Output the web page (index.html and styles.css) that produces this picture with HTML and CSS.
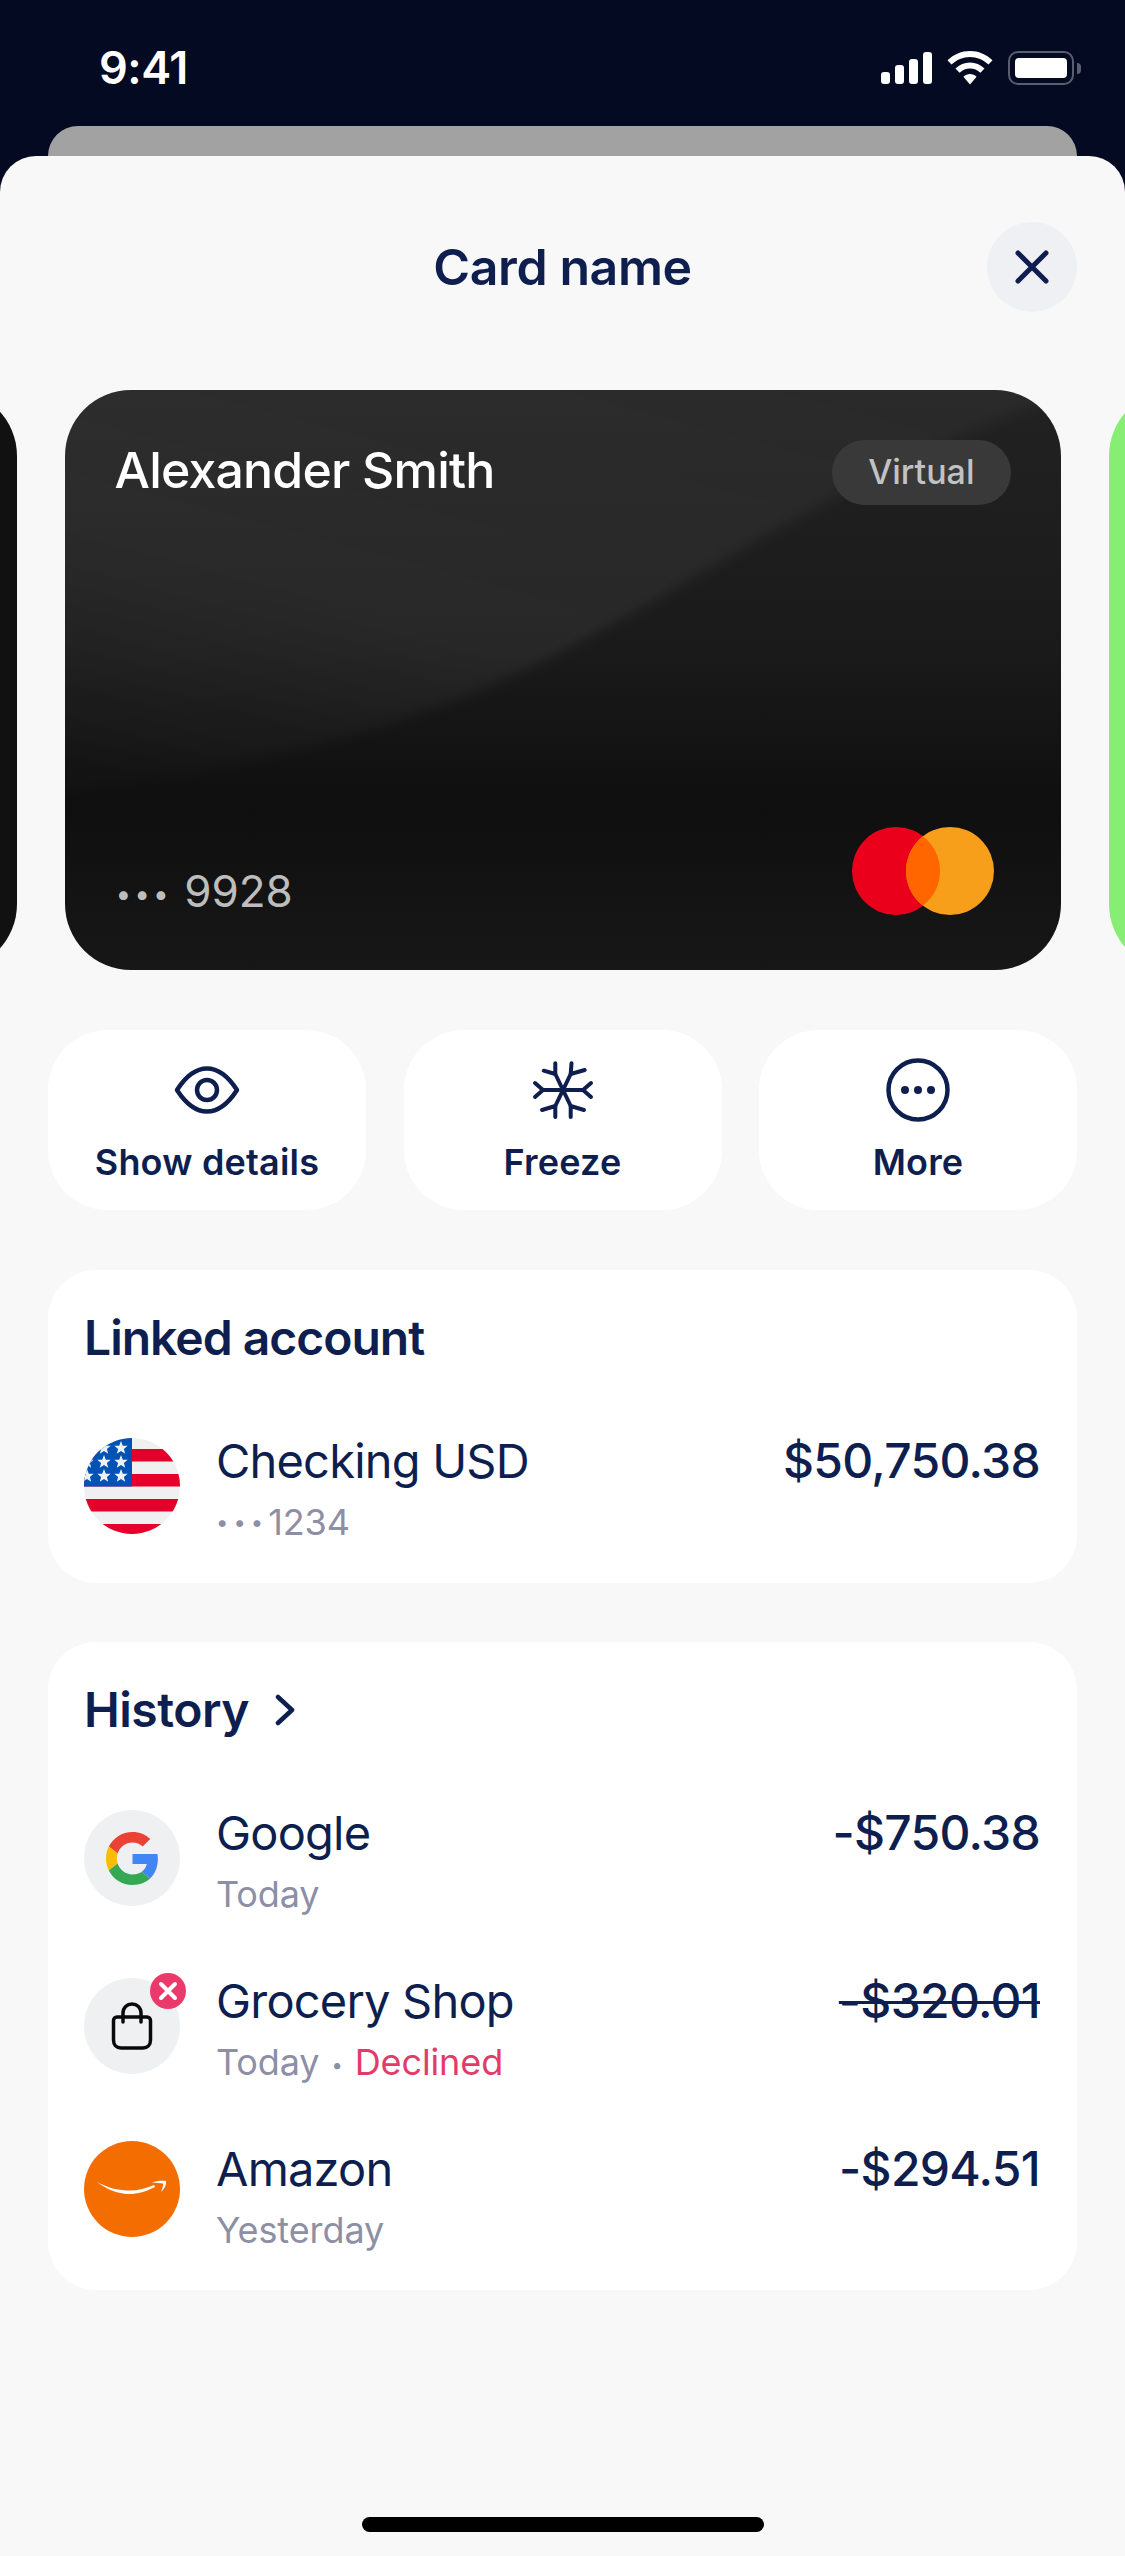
FILE: index.html
```html
<!DOCTYPE html>
<html lang="en">

<head>
  <meta charset="UTF-8">
  <meta name="viewport" content="width=device-width, initial-scale=1.0">
  <title>Card name</title>
  <link rel="stylesheet" href="styles.css">
</head>

<body>
  <div class="status-bar">
    <span class="time">9:41</span>
    <div class="status-icons">
      <svg width="51" height="32" viewBox="0 0 51 32" fill="#fff">
        <rect x="0" y="20" width="9" height="12" rx="3"/>
        <rect x="14" y="13" width="9" height="19" rx="3"/>
        <rect x="28" y="7" width="9" height="25" rx="3"/>
        <rect x="42" y="0" width="9" height="32" rx="3"/>
      </svg>
      <svg width="46" height="34" viewBox="0 0 46 34" fill="#fff">
        <path d="M23 0C14.500 0 6.800 3.300 0.500 9.300L4.500 13.600C9.500 8.800 16 6 23 6C30 6 36.500 8.800 41.500 13.600L45.500 9.300C39.200 3.300 31.500 0 23 0Z"/>
        <path d="M23 11.500C17.500 11.500 12.500 13.600 8.500 17.500L12.600 21.800C15.500 19 19 17.500 23 17.500C27 17.500 30.500 19 33.400 21.800L37.500 17.500C33.500 13.600 28.500 11.500 23 11.500Z"/>
        <path d="M23 23C20.500 23 18.300 23.900 16.400 25.700L23 33.500L29.600 25.700C27.700 23.900 25.500 23 23 23Z"/>
      </svg>
      <div class="battery">
        <div class="battery-body"><div class="battery-level"></div></div>
        <div class="battery-nub"></div>
      </div>
    </div>
  </div>

  <div class="back-sheet"></div>

  <main class="sheet">
    <header class="sheet-header">
      <h1>Card name</h1>
      <button class="close-btn" aria-label="Close">
        <svg width="36" height="36" viewBox="0 0 36 36" fill="none" stroke="#0e1f4f" stroke-width="5" stroke-linecap="round">
          <path d="M4 4L32 32M32 4L4 32"/>
        </svg>
      </button>
    </header>

    <section class="carousel">
      <div class="card card-peek"></div>
      <div class="card card-main">
        <svg class="card-sheen" viewBox="0 0 996 580" preserveAspectRatio="none">
          <defs>
            <linearGradient id="sheen" x1="0.8" y1="0" x2="0.15" y2="1">
              <stop offset="0" stop-color="#fff" stop-opacity="0.035"/>
              <stop offset="0.6" stop-color="#fff" stop-opacity="0.06"/>
              <stop offset="1" stop-color="#fff" stop-opacity="0.01"/>
            </linearGradient>
            <filter id="soft"><feGaussianBlur stdDeviation="6"/></filter>
          </defs>
          <path d="M-20 -20H1016V0C800 70 640 190 480 270C350 335 200 375 -20 404Z" fill="url(#sheen)" filter="url(#soft)"/>
        </svg>
        <div class="card-top">
          <span class="card-holder">Alexander Smith</span>
          <span class="card-tag">Virtual</span>
        </div>
        <div class="card-bottom">
          <span class="card-number"><span class="dots">•••</span> 9928</span>
          <svg class="mastercard" width="142" height="88" viewBox="0 0 142 88">
            <circle cx="44" cy="44" r="44" fill="#eb001b"/>
            <circle cx="98" cy="44" r="44" fill="#f79e1b"/>
            <path d="M71 9.500C81.700 17.500 88 30 88 44C88 58 81.700 70.500 71 78.500C60.300 70.500 54 58 54 44C54 30 60.300 17.500 71 9.500Z" fill="#ff6600"/>
          </svg>
        </div>
      </div>
      <div class="card card-peek card-green"></div>
    </section>

    <section class="actions">
      <div class="action">
        <svg width="66" height="64" viewBox="0 0 66 64" fill="none" stroke="#0e1f4f" stroke-width="4.500">
          <path d="M3 32C12 18 22 10.500 33 10.500C44 10.500 54 18 63 32C54 46 44 53.500 33 53.500C22 53.500 12 46 3 32Z" stroke-linejoin="round"/>
          <circle cx="33" cy="32" r="10"/>
        </svg>
        <span>Show details</span>
      </div>
      <div class="action">
        <svg width="64" height="64" viewBox="8 8 64 64" fill="none" stroke="#0e1f4f" stroke-width="4" stroke-linecap="round" stroke-linejoin="round">
          <path d="M20 40H60M32.300 24L47.700 56M47.700 24L32.300 56"/>
          <path d="M12 33L20 40L12 47M68 33L60 40L68 47"/>
          <path d="M32.300 13.300V24L20.700 20.700M48.500 13.300L47.700 24L61.700 20M32.300 67V56L19 60M47.700 67V56L61 60"/>
        </svg>
        <span>Freeze</span>
      </div>
      <div class="action">
        <svg width="64" height="64" viewBox="0 0 64 64" fill="none" stroke="#0e1f4f" stroke-width="4.500">
          <circle cx="32" cy="32" r="29.500"/>
          <circle cx="19" cy="32" r="4" fill="#0e1f4f" stroke="none"/>
          <circle cx="32" cy="32" r="4" fill="#0e1f4f" stroke="none"/>
          <circle cx="45" cy="32" r="4" fill="#0e1f4f" stroke="none"/>
        </svg>
        <span>More</span>
      </div>
    </section>

    <section class="panel panel-linked">
      <h2>Linked account</h2>
      <div class="row">
        <svg class="row-icon" width="96" height="96" viewBox="0 0 96 96">
          <defs>
            <clipPath id="flag-clip"><circle cx="48" cy="48" r="48"/></clipPath>
            <polygon id="star" points="0,-7 1.800,-2.300 6.700,-2.200 2.900,0.900 4.200,5.700 0,3 -4.200,5.700 -2.900,0.900 -6.700,-2.200 -1.800,-2.300"/>
          </defs>
          <g clip-path="url(#flag-clip)">
            <rect width="96" height="96" fill="#f0f0f0"/>
            <rect y="11" width="96" height="12.500" fill="#e4002b"/>
            <rect y="36" width="96" height="12.500" fill="#e4002b"/>
            <rect y="61" width="96" height="12.500" fill="#e4002b"/>
            <rect y="86" width="96" height="12.500" fill="#e4002b"/>
            <rect width="48" height="48.500" fill="#0052b4"/>
            <g fill="#f0f0f0">
              <use href="#star" x="37" y="10"/>
              <use href="#star" x="20" y="10"/>
              <use href="#star" x="37" y="24"/>
              <use href="#star" x="20" y="24"/>
              <use href="#star" x="3" y="24"/>
              <use href="#star" x="37" y="38"/>
              <use href="#star" x="20" y="38"/>
              <use href="#star" x="3" y="38"/>
            </g>
          </g>
        </svg>
        <div class="row-text">
          <div class="row-name">Checking USD</div>
          <div class="row-sub"><span class="dots-sm">•••</span>1234</div>
        </div>
        <div class="row-amount">$50,750.38</div>
      </div>
    </section>

    <section class="panel panel-history">
      <h2>History
        <svg width="22" height="32" viewBox="0 0 22 32" fill="none" stroke="#0e1f4f" stroke-width="4.500" stroke-linecap="round" stroke-linejoin="round">
          <path d="M4 3L18 16L4 29"/>
        </svg>
      </h2>

      <div class="row">
        <div class="row-icon icon-circle">
          <svg width="53" height="53" viewBox="0 0 48 48">
            <path fill="#EA4335" d="M24 9.500c3.540 0 6.710 1.220 9.210 3.600l6.850-6.850C35.900 2.380 30.470 0 24 0 14.620 0 6.510 5.380 2.560 13.220l7.980 6.190C12.430 13.720 17.740 9.500 24 9.500z"/>
            <path fill="#4285F4" d="M46.980 24.550c0-1.570-.150-3.090-.380-4.550H24v9.020h12.940c-.580 2.960-2.260 5.480-4.780 7.180l7.730 6c4.510-4.180 7.090-10.360 7.090-17.650z"/>
            <path fill="#FBBC05" d="M10.530 28.590c-.480-1.450-.760-2.990-.760-4.590s.270-3.140.760-4.590l-7.980-6.190C.920 16.460 0 20.120 0 24c0 3.880.920 7.540 2.560 10.780l7.970-6.190z"/>
            <path fill="#34A853" d="M24 48c6.480 0 11.930-2.130 15.890-5.810l-7.730-6c-2.150 1.450-4.920 2.300-8.160 2.300-6.260 0-11.570-4.220-13.470-9.910l-7.980 6.190C6.510 42.620 14.620 48 24 48z"/>
          </svg>
        </div>
        <div class="row-text">
          <div class="row-name">Google</div>
          <div class="row-sub">Today</div>
        </div>
        <div class="row-amount">-$750.38</div>
      </div>

      <div class="row">
        <div class="row-icon icon-circle">
          <svg width="42" height="48" viewBox="0 0 42 48" fill="none" stroke="#0a0a0a" stroke-width="3.500" stroke-linecap="round" stroke-linejoin="round">
            <path d="M6 15H36C38 15 39.500 16.500 39.500 18.500V38C39.500 43 36.500 46 32 46H10C5.500 46 2.500 43 2.500 38V18.500C2.500 16.500 4 15 6 15Z"/>
            <path d="M12 20V11C12 5.500 16 2 21 2C26 2 30 5.500 30 11V20"/>
          </svg>
          <span class="badge">
            <svg width="20" height="20" viewBox="0 0 20 20" stroke="#fff" stroke-width="4" stroke-linecap="round">
              <path d="M3 3L17 17M17 3L3 17"/>
            </svg>
          </span>
        </div>
        <div class="row-text">
          <div class="row-name">Grocery Shop</div>
          <div class="row-sub">Today<span class="sep">•</span><span class="declined">Declined</span></div>
        </div>
        <div class="row-amount struck">-$320.01</div>
      </div>

      <div class="row">
        <div class="row-icon icon-circle icon-amazon">
          <svg width="72" height="18" viewBox="0 0 72 18" fill="#fff">
            <path d="M0.500 1.500C12 8.500 24 10.500 34 10.500C42 10.500 50 8.500 58 5L59 7C50 11.500 42 14 33 14C21 14 10 9 0.500 1.500Z"/>
            <path d="M56 2.500C60 1 66 0.500 70 1C70.500 5 68.500 9 65 12C66 9 67.500 6 67 3.500C64 3 60 3 56 2.500Z"/>
          </svg>
        </div>
        <div class="row-text">
          <div class="row-name">Amazon</div>
          <div class="row-sub">Yesterday</div>
        </div>
        <div class="row-amount">-$294.51</div>
      </div>
    </section>

    <div class="home-indicator"></div>
  </main>
</body>

</html>
```
FILE: styles.css
```css
* {
  box-sizing: border-box;
}

html,
body {
  margin: 0;
  padding: 0;
}

body {
  width: 1125px;
  height: 2556px;
  overflow: hidden;
  background-color: #040a22;
  font-family: Inter, "Liberation Sans", sans-serif;
  color: #0e1f4f;
}

.status-bar {
  height: 126px;
  display: flex;
  justify-content: space-between;
  align-items: flex-start;
  padding: 41px 44px 0 99px;
  color: #fff;
}

.time {
  font-size: 45px;
  line-height: 54px;
  font-weight: 600;
  letter-spacing: -0.5px;
}

.status-icons {
  display: flex;
  align-items: center;
  gap: 15px;
  padding-top: 10px;
}

.battery {
  display: flex;
  align-items: center;
  gap: 3px;
}

.battery-body {
  width: 66px;
  height: 34px;
  padding: 5px;
  border: 2.500px solid #5a5e70;
  border-radius: 10px;
}

.battery-level {
  height: 100%;
  background-color: #fff;
  border-radius: 4px;
}

.battery-nub {
  width: 4px;
  height: 11px;
  background-color: #5a5e70;
  border-radius: 0 4px 4px 0;
}

.back-sheet {
  height: 30px;
  margin: 0 48px;
  background-color: #a2a2a2;
  border-radius: 30px 30px 0 0;
}

.sheet {
  height: 2400px;
  display: flex;
  flex-direction: column;
  background-color: #f8f8f9;
  border-radius: 36px 36px 0 0;
}

.sheet-header {
  display: grid;
  grid-template-columns: 90px 1fr 90px;
  align-items: center;
  margin-top: 66px;
  padding: 0 48px;
}

.sheet-header h1 {
  grid-column: 2;
  margin: 0;
  font-size: 50px;
  font-weight: 600;
  letter-spacing: -0.4px;
  text-align: center;
}

.close-btn {
  display: flex;
  align-items: center;
  justify-content: center;
  width: 90px;
  height: 90px;
  padding: 0;
  border: none;
  border-radius: 50%;
  background-color: #eff0f3;
}

.carousel {
  display: flex;
  justify-content: center;
  gap: 48px;
  margin-top: 78px;
  overflow: hidden;
}

.card {
  flex: none;
  width: 996px;
  height: 580px;
  border-radius: 66px;
}

.card-peek {
  background-color: #111;
}

.card-green {
  background-color: #86ee72;
}

.card-main {
  position: relative;
  overflow: hidden;
  display: flex;
  flex-direction: column;
  justify-content: space-between;
  padding: 50px 50px 55px 50px;
  background: linear-gradient(180deg, #222 0%, #1a1a1a 45%, #0f0f0f 72%, #171717 100%);
  color: #fff;
}

.card-sheen {
  position: absolute;
  top: 0;
  left: 0;
  width: 100%;
  height: 100%;
}

.card-top,
.card-bottom {
  position: relative;
  display: flex;
  justify-content: space-between;
}

.card-top {
  align-items: center;
}

.card-bottom {
  align-items: flex-end;
  padding-right: 17px;
}

.card-holder {
  margin-top: -6px;
  font-size: 50px;
  font-weight: 500;
  letter-spacing: -0.8px;
}

.card-tag {
  padding: 0 36px;
  height: 65px;
  line-height: 63px;
  font-size: 34px;
  font-weight: 500;
  color: #c2c2c2;
  background-color: #393939;
  border-radius: 33px;
}

.card-number {
  margin-bottom: -6px;
  margin-left: 1px;
  font-size: 44px;
  line-height: 54px;
  color: #bdbdbd;
}

.dots {
  font-size: 28px;
  letter-spacing: 3px;
  vertical-align: 3px;
}

.actions {
  display: grid;
  grid-template-columns: repeat(3, 318px);
  justify-content: space-between;
  margin: 60px 48px 0;
}

.action {
  height: 180px;
  display: flex;
  flex-direction: column;
  align-items: center;
  padding-top: 28px;
  background-color: #fff;
  border-radius: 60px;
}

.action span {
  margin-top: 18px;
  font-size: 36px;
  line-height: 44px;
  font-weight: 600;
  letter-spacing: 0.2px;
}

.panel {
  margin: 60px 48px 0;
  padding: 0 37px 0 36px;
  background-color: #fff;
  border-radius: 48px;
}

.panel h2 {
  margin: 0;
  display: flex;
  align-items: center;
  gap: 24px;
  font-size: 48px;
  line-height: 58px;
  font-weight: 600;
  letter-spacing: -1px;
}

.panel-linked {
  height: 313px;
  padding-top: 39px;
}

.panel-linked .row {
  margin-top: 71px;
}

.panel-history {
  height: 648px;
  margin-top: 59px;
  padding-top: 39px;
}

.panel-history h2 {
  gap: 25px;
  margin-bottom: 71px;
  letter-spacing: -0.5px;
}

.row {
  height: 168px;
  display: flex;
  align-items: flex-start;
}

.row-icon {
  flex: none;
  width: 96px;
  height: 96px;
}

.icon-circle {
  position: relative;
  display: flex;
  align-items: center;
  justify-content: center;
  background-color: #eff0f2;
  border-radius: 50%;
}

.icon-amazon {
  margin-top: -5px;
  background-color: #f46d00;
}

.badge {
  position: absolute;
  top: -5px;
  right: -6px;
  display: flex;
  align-items: center;
  justify-content: center;
  width: 36px;
  height: 36px;
  background-color: #e93a6b;
  border-radius: 50%;
}

.row-text {
  flex: 1;
  margin-top: -6px;
  margin-left: 36px;
}

.row-name {
  font-size: 47px;
  line-height: 58px;
  font-weight: 400;
  letter-spacing: -0.8px;
}

.row-sub {
  margin-top: 10px;
  font-size: 36px;
  line-height: 44px;
  letter-spacing: -0.1px;
  color: #8d8fa5;
}

.dots-sm {
  font-size: 22px;
  letter-spacing: 5px;
  vertical-align: 5px;
}

.sep {
  margin: 0 12px;
  font-size: 20px;
  vertical-align: 3px;
}

.declined {
  color: #e33b69;
}

.row-amount {
  margin-top: -6px;
  font-size: 48px;
  line-height: 58px;
  font-weight: 500;
  letter-spacing: -0.7px;
}

.row-amount.struck {
  text-decoration: line-through;
  text-decoration-thickness: 3px;
}

.home-indicator {
  width: 402px;
  height: 15px;
  margin: auto auto 24px;
  background-color: #000;
  border-radius: 8px;
}
```
